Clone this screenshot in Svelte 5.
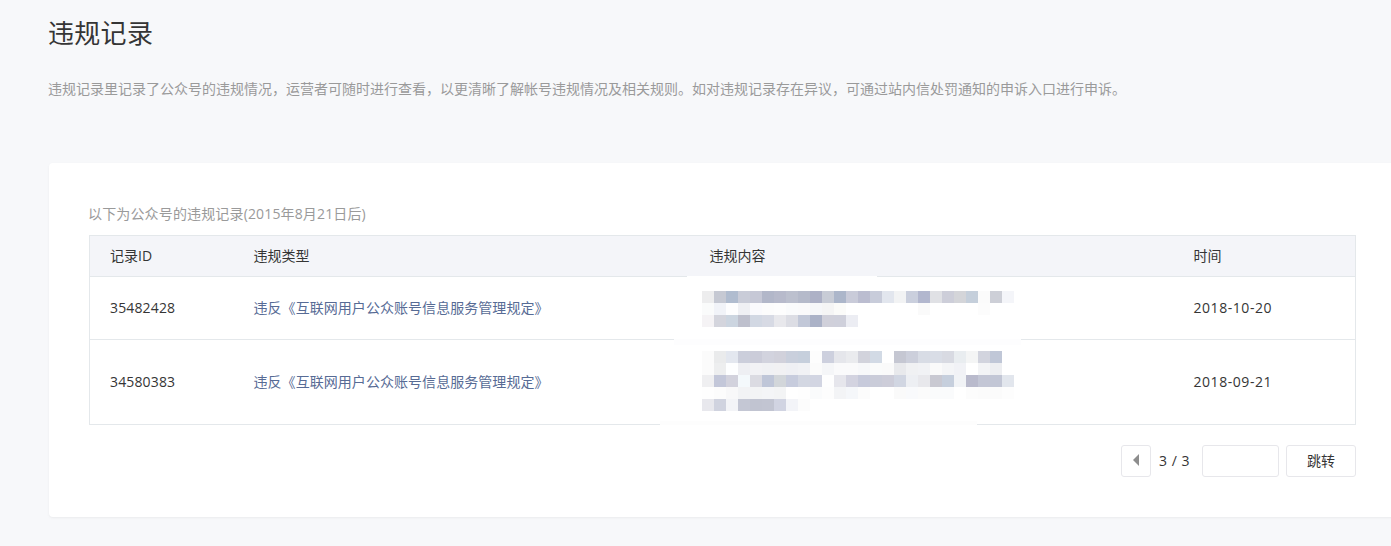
<script>
  const w = 'ffffff';
  const mosaic1 = [
    ['ededee','c6c9d3','b0bccf','c9ccd8','c6c8d6','b2b7c9','b7bacb','bcc0ce','b5baca','adb1c6','c8ccd6','acb6ca','c9cbd9','bbbdd0','c8ccda','e2e6ee','f2f3f4','cacfdd','b2b7ce','e0e1e5','cdced9','d4d5d9','c5cfdb','fbfbfb','cdcfd7','f4f5f9'],
    ['fafbfb','f1f3f8','fdfdfe','eff0f4','fafafd','fcfcfc','fdfdfd','fafbfc','fafafb','f6f7f9','f5f5f5','fbfbf9',w,w,w,w,w,w,'fafafa',w,w,w,w,'fcfcfc',w,w],
    ['f5f3f5','d4d5dd','ccd5e0','bec0cd','d2d8e3','d7dae4','e8e8ec','dcdde4','c2c8d8','abb2c7','d0d0da','cfd0db','ecedf3',w,w,w,w,w,w,w,w,w,w,w,w,w]
  ];
  const mosaic2 = [
    ['fbfbfb','eaebec','e3e7ef','cbcedb','cbccd9','d2d3de','d1d1db','c9cfdc','c6cfdc','fdfdfd','cdd0de','e5e6eb','eaebee','d2d3dc','d2dae5',w,'c5c7d2','cccfdb','d8dce5','d9dde6','d8dae2','e9edf0','f4f5f5','d2d4de','c0c7d7',w],
    ['fbfbfb','edeeef','fdfeff','eeeff3','f2f2f5','f0f1f4','f1f1f3','eff0f4','f1f2f5','fbfbfb','f5f6f8','fafafb','fafafb','f7f8fa','fafbfb','fafafa','e8e9ec','f0f1f3','f1f2f5','fafafa','f4f5f7','f1f2f6',w,'f3f4f6','edeef1',w],
    ['efeff1','c3c7d9','d2d2dd','f4f9fc','dbdbe2','bfc6d8','d2d6da','c7ccdd','d3d7e2','d2d5e2','fefefe','e6e6ec','d3d3e0','c7cadb','caccd9','cdcdd9','d1d6e2','edeff3','e8e8ec','c9c9d2','c6cfdd','f1f3f6','b9bacc','c3c6d5','c2c6d5','e2e6ed'],
    ['fefefe','fcfcfc','f8f8f9','f2f3f5','f3f4f5','f4f5f7','f3f4f5',w,'fefefe','fafbfc','fdfdfd','f3f4f6','f5f7fa','fcfcfc',w,w,'fafafa','f9fafc','fbfbfb','fafbfc','fafbfc',w,'fcfcfc','fbfbfb','fbfbfb','fdfdfd'],
    ['e8e8ed','d0d3df','f3f4f7','c4c7d4','c1c4d1','c2c5d2','d1d4e2','f3f4f8','fcfcfc',w,w,w,w,w,w,w,w,w,w,w,w,w,w,w,w,w]
  ];
  const rule = '违反《互联网用户公众账号信息服务管理规定》';
  const rows = [
    { id: '35482428', cells: mosaic1, date: '2018-10-20', cls: 'first' },
    { id: '34580383', cells: mosaic2, date: '2018-09-21', cls: 'second' }
  ];
</script>

<div class="page">
  <header class="head">
    <h1>违规记录</h1>
    <p>违规记录里记录了公众号的违规情况，运营者可随时进行查看，以更清晰了解帐号违规情况及相关规则。如对违规记录存在异议，可通过站内信处罚通知的申诉入口进行申诉。</p>
  </header>

  <section class="card">
    <div class="caption">以下为公众号的违规记录(2015年8月21日后)</div>
    <table>
      <colgroup>
        <col class="c1" /><col class="c2" /><col class="c3" /><col class="c4" />
      </colgroup>
      <thead>
        <tr><th>记录ID</th><th>违规类型</th><th>违规内容</th><th>时间</th></tr>
      </thead>
      <tbody>
        {#each rows as row}
          <tr class={row.cls}>
            <td class="id">{row.id}</td>
            <td><a href="#rule">{rule}</a></td>
            <td class="content">
              <span class="patch"></span>
              <div class="mosaic">
                {#each row.cells as line}
                  {#each line as c}
                    <i style="background:#{c}"></i>
                  {/each}
                {/each}
              </div>
            </td>
            <td class="date">{row.date}</td>
          </tr>
        {/each}
      </tbody>
    </table>

    <div class="pager">
      <button class="prev" aria-label="上一页"><span class="arrow"></span></button>
      <span class="num">3 / 3</span>
      <input type="text" aria-label="页码" />
      <button class="go">跳转</button>
    </div>
  </section>
</div>

<style>
  :global(body) {
    margin: 0;
    background: #f7f8fa;
  }
  .page {
    width: 1391px;
    height: 546px;
    overflow: hidden;
    padding-left: 49px;
    box-sizing: border-box;
    font-family: "Open Sans", "Noto Sans CJK SC", sans-serif;
    font-size: 14px;
    color: #353535;
  }
  .head {
    height: 163px;
    padding-top: 13px;
    box-sizing: border-box;
  }
  h1 {
    margin: 0 0 0 -1px;
    font-size: 26px;
    font-weight: 400;
    line-height: 40px;
    letter-spacing: 0.3px;
    color: #353535;
  }
  .head p {
    margin: 25px 0 0 -1px;
    line-height: 22px;
    color: #9a9a9a;
    white-space: nowrap;
  }
  .card {
    width: 1347px;
    height: 354px;
    box-sizing: border-box;
    padding: 40px 40px 0;
    background: #fff;
    border-radius: 4px;
    box-shadow: 0 1px 2px rgba(150, 150, 150, 0.12);
  }
  .caption {
    height: 32px;
    margin-left: -1px;
    line-height: 22px;
    color: #9a9a9a;
    letter-spacing: 0.15px;
  }
  table {
    width: 1266px;
    table-layout: fixed;
    border-collapse: collapse;
    border: 1px solid #e4e8eb;
  }
  .c1 { width: 144px; }
  .c2 { width: 456px; }
  .c3 { width: 484px; }
  .c4 { width: 182px; }
  th, td {
    padding: 0 0 2px 20px;
    text-align: left;
    font-weight: 400;
    white-space: nowrap;
  }
  th {
    height: 38px;
    background: #f4f5f9;
    border-bottom: 1px solid #e4e8eb;
    color: #353535;
  }
  td {
    border-bottom: 1px solid #e4e8eb;
  }
  .first td { height: 60px; }
  .second td { height: 82px; }
  .id {
    letter-spacing: 0.15px;
  }
  .date {
    letter-spacing: 0.55px;
  }
  a {
    color: #576b95;
    text-decoration: none;
    letter-spacing: 0.05px;
  }
  .content {
    position: relative;
  }
  .mosaic {
    position: absolute;
    left: 12px;
    display: grid;
    grid-template-columns: repeat(26, 12px);
    grid-auto-rows: 12px;
  }
  .first .mosaic { top: 14px; }
  .second .mosaic { top: 11px; }
  .mosaic i {
    display: block;
  }
  .patch {
    position: absolute;
    background: #fdfdfe;
  }
  .first .patch {
    left: -3px;
    top: -1px;
    width: 190px;
    height: 3px;
    background: #fff;
  }
  .second .patch {
    left: -16px;
    top: -1px;
    width: 347px;
    height: 6px;
  }
  .second .content::after {
    content: "";
    position: absolute;
    left: -30px;
    bottom: -1px;
    width: 317px;
    height: 4px;
    background: #fdfdfd;
  }
  .pager {
    display: flex;
    justify-content: flex-end;
    align-items: center;
    margin-top: 20px;
    height: 32px;
    width: 1267px;
  }
  .pager button, .pager input {
    height: 32px;
    box-sizing: border-box;
    border: 1px solid #e7e7eb;
    border-radius: 3px;
    background: #fff;
    padding: 0 0 2px;
    font: inherit;
    color: #353535;
  }
  .prev {
    width: 30px;
    display: flex;
    align-items: center;
    justify-content: center;
  }
  .arrow {
    width: 0;
    height: 0;
    border-style: solid;
    border-width: 6px 6px 6px 0;
    border-color: transparent #8d8d8d transparent transparent;
  }
  .num {
    width: 51px;
    box-sizing: border-box;
    padding-left: 8px;
    padding-bottom: 2px;
    word-spacing: 1px;
    color: #353535;
  }
  .pager input {
    width: 77px;
    margin-right: 7px;
  }
  .go {
    width: 70px;
  }
</style>
